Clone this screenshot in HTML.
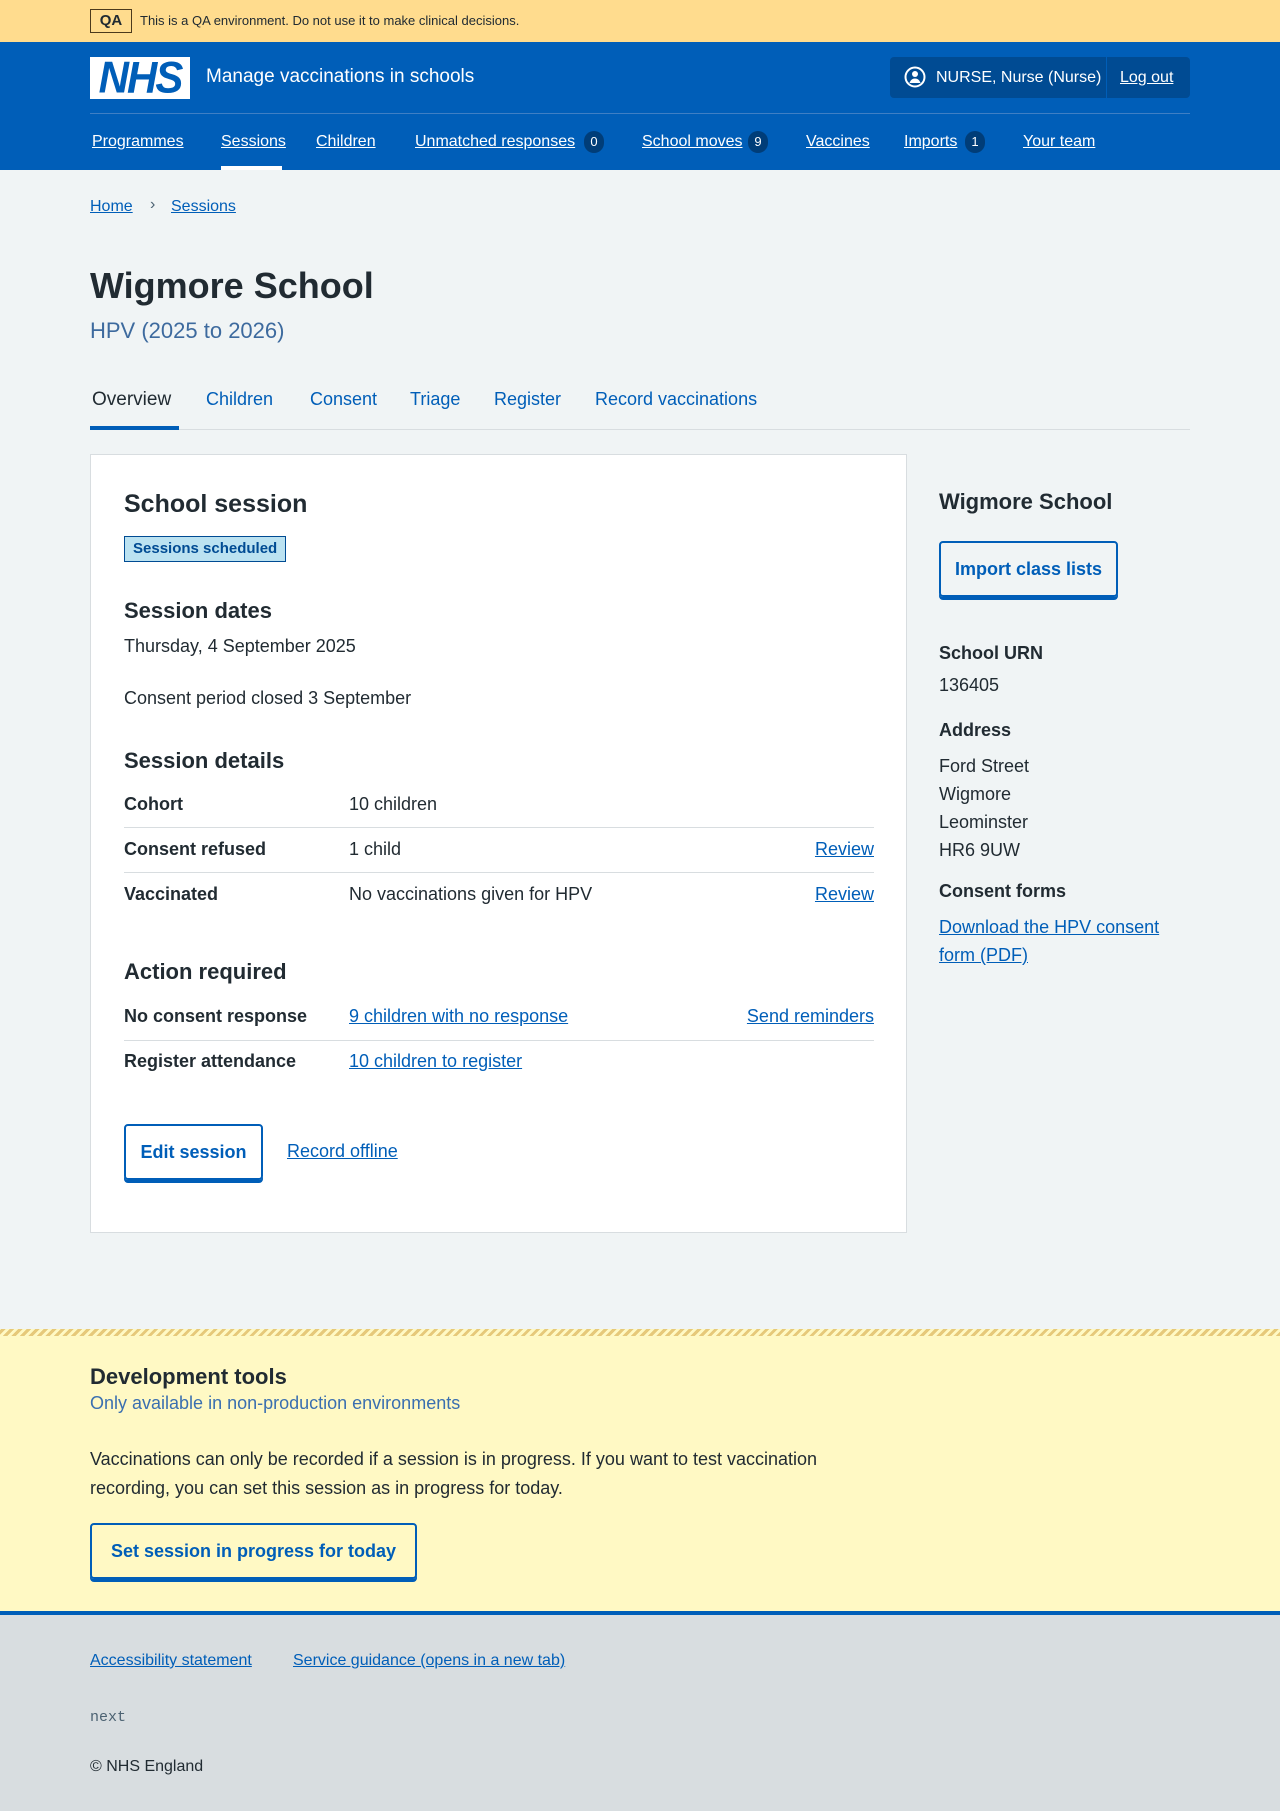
<!DOCTYPE html>
<html><head><meta charset="utf-8"><style>
*{box-sizing:border-box;margin:0;padding:0}
body{width:1280px;height:1811px;position:relative;background:#f0f4f5;font-family:"Liberation Sans",sans-serif;color:#212b32;overflow:hidden}
.a{position:absolute;white-space:nowrap}
a{color:#005eb8;text-decoration:underline}
.b{font-weight:bold}
.t{font-size:18px}
.btn{position:absolute;border:2px solid #005eb8;border-radius:4px;box-shadow:0 3px 0 #005eb8;color:#005eb8;font-weight:bold;font-size:18px;display:flex;align-items:center;justify-content:center;background:transparent}
.hr{position:absolute;height:1px;background:#d8dde0}
.nav a{color:#fff;font-size:16px;position:absolute;top:133px}
.cnt{display:inline-block;background:#003d78;color:#fff;border-radius:11px;font-size:13px;min-width:20px;height:22px;line-height:22px;text-align:center;text-decoration:none;position:absolute;top:131px}
.tab{position:absolute;top:389px;font-size:18px;color:#005eb8}
</style></head><body>
<div class="a" style="left:0;top:0;width:1280px;height:42px;background:#ffdc8e"></div>
<div class="a" style="left:90px;top:9px;width:42px;height:24px;border:1px solid #4c3a1c;font-size:15px;font-weight:bold;text-align:center;line-height:22px">QA</div>
<div class="a" style="left:140px;top:13px;font-size:13px">This is a QA environment. Do not use it to make clinical decisions.</div>
<div class="a" style="left:0;top:42px;width:1280px;height:128px;background:#005eb8"></div>
<div class="a" style="left:90px;top:58px;width:100px;height:40px;background:#fff;color:#005eb8;font-weight:bold;font-style:italic;font-size:42px;line-height:40px;text-align:center;letter-spacing:-2px;transform:scaleY(1.05)">NHS</div>
<div class="a" style="left:206px;top:66px;color:#fff;font-size:19px">Manage vaccinations in schools</div>
<div class="a" style="left:890px;top:57px;width:300px;height:41px;background:#004b93;border-radius:4px"></div>
<div class="a" style="left:1106px;top:57px;width:1px;height:41px;background:#005eb8"></div>
<svg class="a" style="left:904px;top:66px" width="22" height="22" viewBox="0 0 22 22"><circle cx="11" cy="11" r="9.5" fill="none" stroke="#fff" stroke-width="2"/><circle cx="11" cy="8" r="3" fill="#fff"/><path d="M5.5 17c1-3 3-4.5 5.5-4.5s4.5 1.5 5.5 4.5" fill="#fff"/></svg>
<div class="a" style="left:936px;top:69px;color:#fff;font-size:16px">NURSE, Nurse (Nurse)</div>
<a class="a" style="left:1120px;top:69px;color:#fff;font-size:16px">Log out</a>
<div class="a" style="left:90px;top:113px;width:1100px;height:1px;background:#3f7fc4"></div>
<div class="nav">
<a style="left:92px">Programmes</a>
<a style="left:221px">Sessions</a>
<a style="left:316px">Children</a>
<a style="left:415px">Unmatched responses</a><span class="cnt" style="left:584px">0</span>
<a style="left:642px">School moves</a><span class="cnt" style="left:748px">9</span>
<a style="left:806px">Vaccines</a>
<a style="left:904px">Imports</a><span class="cnt" style="left:965px">1</span>
<a style="left:1023px">Your team</a>
</div>
<div class="a" style="left:221px;top:166px;width:61px;height:4px;background:#fff"></div>
<a class="a" style="left:90px;top:198px;font-size:16px">Home</a>
<div class="a" style="left:150px;top:196px;font-size:16px;color:#4c6272">›</div>
<a class="a" style="left:171px;top:198px;font-size:16px">Sessions</a>
<div class="a b" style="left:90px;top:265px;font-size:36px">Wigmore School</div>
<div class="a" style="left:90px;top:318px;font-size:22px;color:#3d6a9e">HPV (2025 to 2026)</div>
<div class="tab" style="left:92px;color:#212b32;font-size:19px">Overview</div>
<div class="tab" style="left:206px">Children</div>
<div class="tab" style="left:310px">Consent</div>
<div class="tab" style="left:410px">Triage</div>
<div class="tab" style="left:494px">Register</div>
<div class="tab" style="left:595px">Record vaccinations</div>
<div class="hr" style="left:90px;top:429px;width:1100px"></div>
<div class="a" style="left:90px;top:426px;width:89px;height:4px;background:#005eb8"></div>
<div class="a" style="left:90px;top:454px;width:817px;height:779px;background:#fff;border:1px solid #d8dde0"></div>
<div class="a b" style="left:124px;top:490px;font-size:25px">School session</div>
<div class="a b" style="left:124px;top:536px;height:26px;padding:0 8px;background:#bbe2f1;border:1px solid #004b93;color:#004b93;font-size:15px;line-height:24px">Sessions scheduled</div>
<div class="a b" style="left:124px;top:598px;font-size:22px">Session dates</div>
<div class="a t" style="left:124px;top:636px">Thursday, 4 September 2025</div>
<div class="a t" style="left:124px;top:688px">Consent period closed 3 September</div>
<div class="a b" style="left:124px;top:748px;font-size:22px">Session details</div>
<div class="a t b" style="left:124px;top:794px">Cohort</div><div class="a t" style="left:349px;top:794px">10 children</div>
<div class="hr" style="left:124px;top:827px;width:750px"></div>
<div class="a t b" style="left:124px;top:839px">Consent refused</div><div class="a t" style="left:349px;top:839px">1 child</div><a class="a t" style="right:406px;top:839px">Review</a>
<div class="hr" style="left:124px;top:872px;width:750px"></div>
<div class="a t b" style="left:124px;top:884px">Vaccinated</div><div class="a t" style="left:349px;top:884px">No vaccinations given for HPV</div><a class="a t" style="right:406px;top:884px">Review</a>
<div class="a b" style="left:124px;top:959px;font-size:22px">Action required</div>
<div class="a t b" style="left:124px;top:1006px">No consent response</div><a class="a t" style="left:349px;top:1006px">9 children with no response</a><a class="a t" style="right:406px;top:1006px">Send reminders</a>
<div class="hr" style="left:124px;top:1040px;width:750px"></div>
<div class="a t b" style="left:124px;top:1051px">Register attendance</div><a class="a t" style="left:349px;top:1051px">10 children to register</a>
<div class="btn" style="left:124px;top:1124px;width:139px;height:56px">Edit session</div>
<a class="a t" style="left:287px;top:1141px">Record offline</a>
<div class="a b" style="left:939px;top:489px;font-size:22px">Wigmore School</div>
<div class="btn" style="left:939px;top:541px;width:179px;height:56px">Import class lists</div>
<div class="a t b" style="left:939px;top:643px">School URN</div>
<div class="a t" style="left:939px;top:675px">136405</div>
<div class="a t b" style="left:939px;top:720px">Address</div>
<div class="a t" style="left:939px;top:752px;line-height:28px">Ford Street<br>Wigmore<br>Leominster<br>HR6 9UW</div>
<div class="a t b" style="left:939px;top:881px">Consent forms</div>
<a class="a t" style="left:939px;top:913px;line-height:28px">Download the HPV consent<br>form (PDF)</a>
<div class="a" style="left:0;top:1329px;width:1280px;height:282px;background:#fff9c4"></div>
<div class="a" style="left:0;top:1329px;width:1280px;height:7px;background:repeating-linear-gradient(-45deg,#e6c97a 0 3px,#fff9c4 3px 6px)"></div>
<div class="a b" style="left:90px;top:1364px;font-size:22px">Development tools</div>
<div class="a t" style="left:90px;top:1393px;color:#3a6fb0">Only available in non-production environments</div>
<div class="a t" style="left:90px;top:1445px;line-height:29px">Vaccinations can only be recorded if a session is in progress. If you want to test vaccination<br>recording, you can set this session as in progress for today.</div>
<div class="btn" style="left:90px;top:1523px;width:327px;height:56px">Set session in progress for today</div>
<div class="a" style="left:0;top:1611px;width:1280px;height:200px;background:#d8dde0;border-top:4px solid #005eb8"></div>
<a class="a" style="left:90px;top:1652px;font-size:16px">Accessibility statement</a>
<a class="a" style="left:293px;top:1652px;font-size:16px">Service guidance (opens in a new tab)</a>
<div class="a" style="left:90px;top:1709px;font-size:15px;font-family:'Liberation Mono',monospace;color:#4c6272">next</div>
<div class="a" style="left:90px;top:1758px;font-size:16px">© NHS England</div>
</body></html>
